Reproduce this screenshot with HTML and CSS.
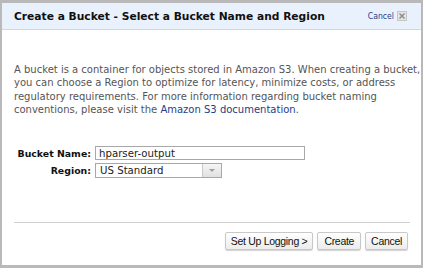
FILE: index.html
```html
<!DOCTYPE html>
<html>
<head>
<meta charset="utf-8">
<link rel="stylesheet" href="styles.css">
</head>
<body>
<div class="dialog">
  <div class="header">
    <h1 class="title">Create a Bucket - Select a Bucket Name and Region</h1>
    <a class="cancel-link" href="#">Cancel</a>
    <span class="close-box"><svg width="6" height="6" viewBox="0 0 6 6"><path d="M0.5 0.5L5.5 5.5M5.5 0.5L0.5 5.5" stroke="#8a8a8a" stroke-width="1.4"/></svg></span>
  </div>
  <div class="body">
    <p class="intro">A bucket is a container for objects stored in Amazon S3. When creating a bucket,<br>you can choose a Region to optimize for latency, minimize costs, or address<br>regulatory requirements. For more information regarding bucket naming<br>conventions, please visit the <a href="#" class="doc-link">Amazon S3 documentation</a>.</p>
    <div class="form">
      <label class="label">Bucket Name:</label>
      <div class="input">hparser-output</div>
      <label class="label">Region:</label>
      <div class="select"><span class="select-text">US Standard</span><span class="select-btn"><svg width="6" height="3" viewBox="0 0 6 3"><path d="M0 0H6L3 3Z" fill="#a0a0a0"/></svg></span></div>
    </div>
  </div>
  <div class="footer">
    <button class="btn">Set Up Logging &gt;</button>
    <button class="btn">Create</button>
    <button class="btn">Cancel</button>
  </div>
</div>
</body>
</html>
```
FILE: styles.css
```css
html, body { margin: 0; padding: 0; background: #fff; }
.dialog {
  width: 423px; height: 268px; box-sizing: border-box;
  border: 3px solid #b9b9b9; border-left-width: 2px; border-right-width: 2px;
  display: flex; flex-direction: column;
  font-family: "DejaVu Sans", Verdana, sans-serif;
}
.header {
  height: 26px; background: #e9f2fc; border-bottom: 1px solid #c5d9f0;
  display: flex; align-items: center; padding: 0 14px 0 12px;
}
.title { margin: 0; font-size: 10.7px; font-weight: bold; color: #111; flex: 1; white-space: nowrap; }
.cancel-link { font-family: "DejaVu Sans Condensed", "DejaVu Sans", sans-serif; font-size: 8.6px; color: #1f3c88; text-decoration: none; margin-right: 3px; }
.close-box {
  width: 8px; height: 8px; border: 1px solid #c6c6c6; background: #e4e4e4;
  display: flex; align-items: center; justify-content: center;
}
.body { padding: 0 12px; flex: 1; }
.intro { margin: 33px 0 0 0; font-size: 10px; line-height: 13.3px; color: #555; white-space: nowrap; }
.doc-link { color: #1f3c88; text-decoration: none; }
.form {
  margin-top: 30px; display: grid; grid-template-columns: 77px auto; column-gap: 4px; row-gap: 3px;
  align-items: center; justify-items: start;
}
.label { font-size: 9.4px; font-weight: bold; color: #111; justify-self: end; white-space: nowrap; }
.input {
  width: 202px; height: 12px; border: 1px solid #a8a8a8; padding: 0 3px;
  font-size: 10.2px; line-height: 13px; color: #222;
}
.select {
  width: 125px; height: 13px; border: 1px solid #a8a8a8; display: flex;
  font-size: 10.2px; line-height: 13px; color: #222;
}
.select-text { flex: 1; padding-left: 4px; }
.select-btn {
  width: 18px; background: linear-gradient(#f6f6f6, #e0e0e0); border-left: 1px solid #c8c8c8;
  display: flex; align-items: center; justify-content: center;
}
.footer {
  margin: 0 11px 0 12px; border-top: 1px solid #d0d0d0; height: 43px;
  display: flex; justify-content: flex-end; align-items: flex-start; gap: 4px; padding: 9px 2px 0 0; box-sizing: border-box;
}
.btn {
  font-family: "Liberation Sans", Arial, sans-serif; font-size: 10.5px; letter-spacing: -0.3px; color: #111;
  height: 18px; padding: 0 5px; border: 1px solid #c8c8c8; border-radius: 2px;
  background: linear-gradient(#ffffff, #ececec); box-shadow: 0 1px 1px rgba(0,0,0,0.18);
}
.btn:nth-child(2) { padding: 0 6px; }
```
